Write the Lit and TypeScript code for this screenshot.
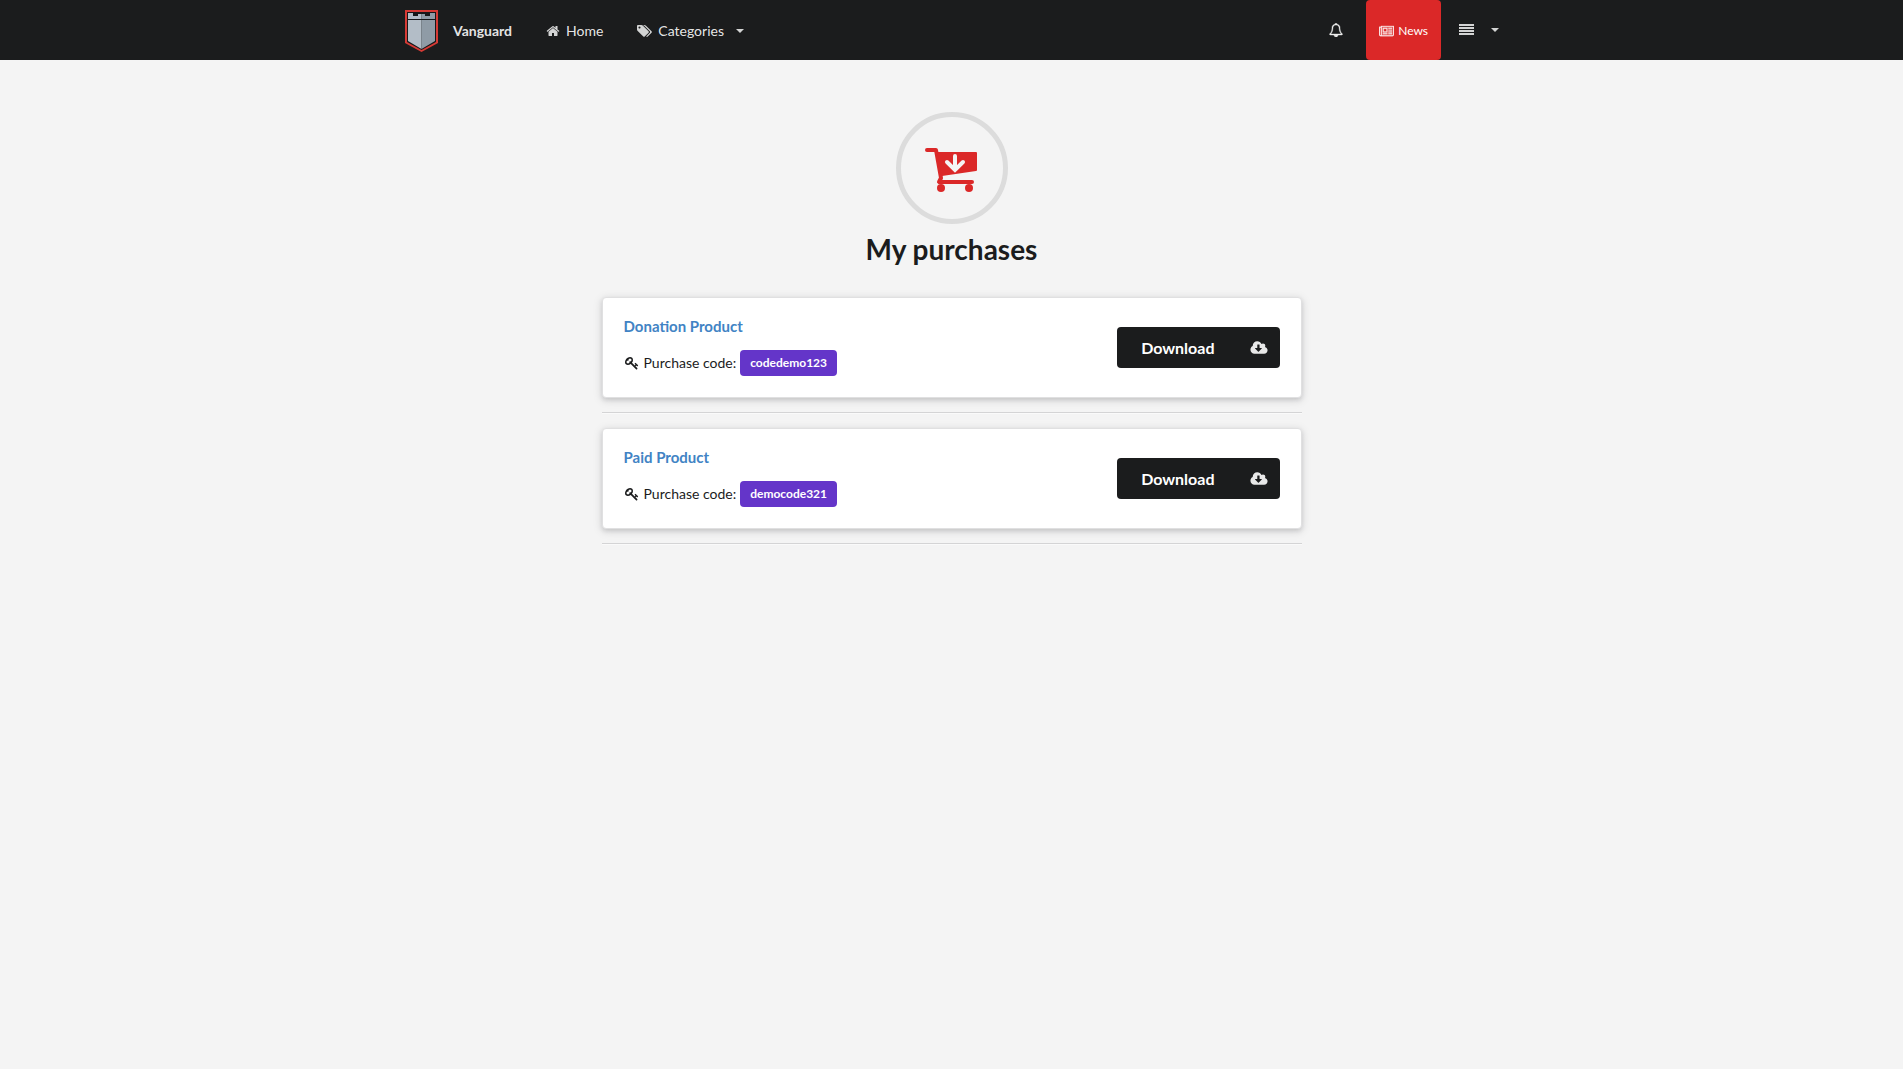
import { LitElement, html, css, svg } from "lit";
import { customElement, property } from "lit/decorators.js";

const icons: Record<string, [string, string]> = {
  home: ["0 0 1792 1792", "M1472 992v480q0 26-19 45t-45 19h-384v-384h-256v384h-384q-26 0-45-19t-19-45v-480q0-1 .5-3t.5-3l575-474 575 474q1 2 1 6zm223-69l-62 74q-8 9-21 11h-3q-13 0-21-7l-692-577-692 577q-12 8-24 7-13-2-21-11l-62-74q-8-10-7-23.5t11-21.5l719-599q32-26 76-26t76 26l244 204v-195q0-14 9-23t23-9h192q14 0 23 9t9 23v408l219 182q10 8 11 21.5t-7 23.5z"],
  tags: ["0 0 1920 1792", "M448 448q0-53-37.5-90.5t-90.5-37.5-90.5 37.5-37.5 90.5 37.5 90.5 90.5 37.5 90.5-37.5 37.5-90.5zm1067 576q0 53-37 90l-491 492q-39 37-91 37-53 0-90-37l-715-716q-38-37-64.5-101t-26.5-117v-416q0-52 38-90t90-38h416q53 0 117 26.5t102 64.5l715 714q37 39 37 91zm384 0q0 53-37 90l-491 492q-39 37-91 37-36 0-59-14t-53-45l470-470q37-37 37-90 0-52-37-91l-715-714q-38-38-102-64.5t-117-26.5h224q53 0 117 26.5t102 64.5l715 714q37 39 37 91z"],
  bell: ["0 0 1792 1792", "M912 1696q0-16-16-16-59 0-101.5-42.5t-42.5-101.5q0-16-16-16t-16 16q0 73 51.5 124.5t124.5 51.5q16 0 16-16zm-666-288h1300q-266-300-266-832 0-51-24-105t-69-103-121.5-80.5-169.5-31.5-169.5 31.5-121.5 80.5-69 103-24 105q0 532-266 832zm1482 0q0 52-38 90t-90 38h-448q0 106-75 181t-181 75-181-75-75-181h-448q-52 0-90-38t-38-90q50-42 91-88t85-119.5 74.5-158.5 50-206 19.5-260q0-152 117-282.5t307-158.5q-8-19-8-39 0-40 28-68t68-28 68 28 28 68q0 20-8 39 190 28 307 158.5t117 282.5q0 139 19.5 260t50 206 74.5 158.5 85 119.5 91 88z"],
  news: ["0 0 2048 1792", "M1024 512h-384v384h384v-384zm128 640v128h-640v-128h640zm0-768v640h-640v-640h640zm640 768v128h-512v-128h512zm0-256v128h-512v-128h512zm0-256v128h-512v-128h512zm0-256v128h-512v-128h512zm-1536 960v-960h-128v960q0 26 19 45t45 19 45-19 19-45zm1664 0v-1088h-1536v1088q0 33-11 64h1483q26 0 45-19t19-45zm128-1216v1216q0 80-56 136t-136 56h-1664q-80 0-136-56t-56-136v-1088h256v-128h1792z"],
  menu: ["0 0 15 14", "M0 1h15v2H0zM0 4h15v2H0zM0 7h15v2H0zM0 10h15v2H0z"],
  caret: ["0 0 14 14", "M3 5h8l-4 4z"],
  cloud: ["-64 0 1920 1792", "M1216 928q0-14-9-23t-23-9h-224v-352q0-13-9.5-22.5t-22.5-9.5h-192q-13 0-22.5 9.5t-9.5 22.5v352h-224q-13 0-22.5 9.5t-9.5 22.5q0 14 9 23l352 352q9 9 23 9t23-9l351-351q10-12 10-24zm640 224q0 159-112.5 271.5t-271.5 112.5h-1088q-185 0-316.5-131.5t-131.5-316.5q0-130 70-240t188-165q-2-30-2-43 0-212 150-362t362-150q156 0 285.5 87t188.5 231q71-62 166-62 106 0 181 75t75 181q0 76-41 138 130 31 213.5 135.5t83.5 238.5z"],
  key: ["0 0 1792 1792", "M832 512q0-80-56-136t-136-56-136 56-56 136q0 42 19 83-41-19-83-19-80 0-136 56t-56 136 56 136 136 56 136-56 56-136q0-42-19-83 41 19 83 19 80 0 136-56t56-136zm851 704q0 17-49 66t-66 49q-9 0-28.5-16t-36.5-33-38.5-40-24.5-26l-96 96 220 220q28 28 28 68 0 42-39 81t-81 39q-40 0-68-28l-671-671q-176 131-365 131-163 0-265.5-102.5t-102.5-265.5q0-160 95-313t248-248 313-95q163 0 265.5 102.5t102.5 265.5q0 189-131 365l355 355 96-96q-3-3-26-24.5t-40-38.5-33-36.5-16-28.5q0-17 49-66t66-49q13 0 23 10 6 6 46 44.5t82 79.5 86.5 86 73 78 28.5 41z"],
};

const icon = (name: string) => html`<svg class="icon ${name}" viewBox=${icons[name][0]} aria-hidden="true">
  ${svg`<path d=${icons[name][1]} />`}
</svg>`;

@customElement("purchase-card")
class PurchaseCard extends LitElement {
  @property() name = "";
  @property() code = "";

  static styles = css`
    :host { display: block; }
    .card {
      display: flex;
      align-items: center;
      justify-content: space-between;
      padding: 18px 21px 21px;
      border: 1px solid #e0e0e1;
      border-radius: 4px;
      background: #fff;
      box-shadow: 0 2px 4px rgba(34, 36, 38, 0.12), 0 2px 10px rgba(34, 36, 38, 0.15);
    }
    .title {
      display: block;
      margin-bottom: 14px;
      font-size: 15px;
      line-height: 20px;
      font-weight: 700;
      color: #4183c4;
      text-decoration: none;
    }
    .line { display: flex; align-items: center; gap: 4px; line-height: 20px; }
    .icon { display: block; fill: currentColor; }
    .key { width: 16px; height: 14px; }
    .code {
      padding: 7px 10px;
      border-radius: 4px;
      background: #6435c9;
      color: #fff;
      font-size: 12px;
      line-height: 12px;
      font-weight: 700;
    }
    .download {
      display: flex;
      align-items: center;
      height: 41px;
      margin: 3px 0 0;
      padding: 0;
      border: 0;
      border-radius: 4px;
      background: #1b1c1d;
      color: #fff;
      font: 700 16px/16px Lato, sans-serif;
      cursor: pointer;
    }
    .label { padding: 0 24px; }
    .side { display: flex; width: 41px; justify-content: center; }
    .cloud { width: 18px; height: 16px; opacity: 0.9; }
  `;

  render() {
    return html`<article class="card">
      <div>
        <a class="title" href="#">${this.name}</a>
        <div class="line">${icon("key")}<span>Purchase code:</span><span class="code">${this.code}</span></div>
      </div>
      <button class="download" type="button">
        <span class="label">Download</span><span class="side">${icon("cloud")}</span>
      </button>
    </article>`;
  }
}

@customElement("app-root")
class AppRoot extends LitElement {
  private purchases = [
    { name: "Donation Product", code: "codedemo123" },
    { name: "Paid Product", code: "democode321" },
  ];

  static styles = css`
    :host {
      display: block;
      min-height: 100vh;
      background: #f4f4f4;
      color: #1b1c1d;
      font: 14px/20px Lato, sans-serif;
    }
    .bar { background: #1b1c1d; }
    .nav {
      display: flex;
      justify-content: space-between;
      box-sizing: border-box;
      max-width: 1127px;
      height: 60px;
      margin: 0 auto;
    }
    .group { display: flex; }
    .item {
      display: flex;
      align-items: center;
      gap: 6px;
      padding: 2px 17px 0;
      border: 0;
      background: none;
      color: rgba(255, 255, 255, 0.9);
      font: 14px/20px Lato, sans-serif;
      text-decoration: none;
      cursor: pointer;
    }
    .brand { gap: 14px; font-weight: 700; }
    .logo { display: block; width: 34px; height: 42px; }
    .icon { display: block; width: 14px; height: 14px; fill: currentColor; opacity: 0.9; }
    .tags { width: 15px; }
    .menu { width: 15px; }
    .categories { gap: 9px; }
    .more { gap: 14px; padding: 0 13px 0 18px; }
    .with-icon { display: flex; align-items: center; gap: 6px; }
    .alert { padding: 0 23px; }
    .bell { stroke: currentColor; stroke-width: 50; opacity: 1; }
    .newsitem {
      gap: 4px;
      padding: 2px 13px 0;
      border-radius: 4px;
      background: #db2828;
      color: #fff;
      font-size: 12px;
    }
    .news { width: 15px; height: 13px; stroke: currentColor; stroke-width: 40; }
    .page {
      display: flex;
      flex-direction: column;
      max-width: 700px;
      margin: 0 auto;
      padding: 52px 0;
    }
    .head { display: flex; flex-direction: column; align-items: center; gap: 7px; margin-bottom: 30px; }
    .ring {
      display: flex;
      align-items: center;
      justify-content: center;
      box-sizing: border-box;
      width: 112px;
      height: 112px;
      padding: 4px 2px 0 0;
      border: 5px solid #dcdcdc;
      border-radius: 50%;
    }
    .cart { width: 52px; height: 44px; }
    h1 { margin: 0; font-size: 28px; line-height: 36px; font-weight: 700; }
    .rule {
      margin: 14px 0;
      border: 0;
      border-top: 1px solid #d4d4d5;
      border-bottom: 1px solid #fafafa;
    }
  `;

  render() {
    return html`
      <header class="bar">
        <nav class="nav" aria-label="Main">
          <div class="group">
            <a class="item brand" href="#">
              <svg class="logo" viewBox="0 0 34 42" aria-hidden="true">
                <path d="M0 0H33V33L16.500 42L0 33Z" fill="#d63a35" />
                <path d="M2 2H31V32L16.500 40L2 32Z" fill="#16181a" />
                <path d="M3 3H8V6H13V4H16.500V39L3 31Z" fill="#b3bdc7" />
                <path d="M16.500 4H20V6H25V3H30V31L16.500 39Z" fill="#8f9ba6" />
                <path d="M3 9H30V10H3Z" fill="#16181a" />
              </svg>
              <span>Vanguard</span>
            </a>
            <a class="item" href="#">${icon("home")}<span>Home</span></a>
            <button class="item categories" type="button">
              <span class="with-icon">${icon("tags")}<span>Categories</span></span>${icon("caret")}
            </button>
          </div>
          <div class="group">
            <button class="item alert" type="button" aria-label="Notifications">${icon("bell")}</button>
            <a class="item newsitem" href="#">${icon("news")}<span>News</span></a>
            <button class="item more" type="button" aria-label="Menu">${icon("menu")}${icon("caret")}</button>
          </div>
        </nav>
      </header>
      <main class="page">
        <div class="head">
          <div class="ring">
            <svg class="cart" viewBox="0 0 52 44" aria-hidden="true">
              <g fill="none" stroke="#db2828" stroke-width="4" stroke-linecap="round" stroke-linejoin="round">
                <path d="M2 2H11L16 30L14 34H47" />
              </g>
              <path d="M12 4H51Q52 4 52 5V22Q52 23 51 23L17 28Z" fill="#db2828" />
              <circle cx="16" cy="40" r="4" fill="#db2828" />
              <circle cx="44" cy="40" r="4" fill="#db2828" />
              <path d="M30 8V21M22 14L30 22L38 14" fill="none" stroke="#f4f4f4" stroke-width="4" stroke-linecap="round" />
            </svg>
          </div>
          <h1>My purchases</h1>
        </div>
        ${this.purchases.map(
          (p) => html`<purchase-card name=${p.name} code=${p.code}></purchase-card><hr class="rule" />`
        )}
      </main>
    `;
  }
}
